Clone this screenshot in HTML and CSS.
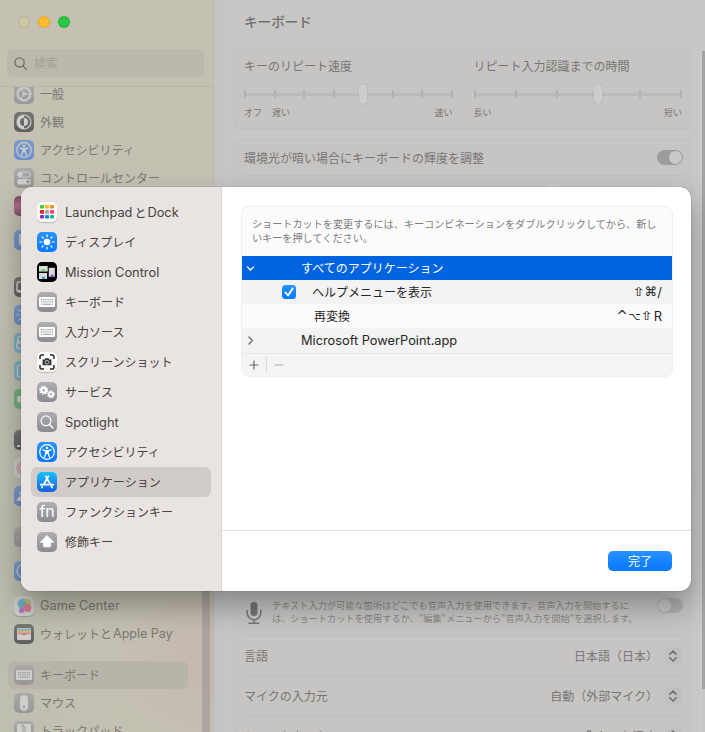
FILE: index.html
```
<!DOCTYPE html>
<html lang="ja">
<head>
<meta charset="utf-8">
<title>キーボード</title>
<link rel="stylesheet" href="styles.css">
</head>
<body>
<svg class="defs" aria-hidden="true">
  <defs>
    <symbol id="access" viewBox="0 0 20 20"><circle cx="10" cy="10" r="7.3" fill="none" stroke="currentColor" stroke-width="1.2"/><circle cx="10" cy="5.9" r="1.2" fill="currentColor"/><path d="M5.9 7.9l2.9.7v2.6l-1.3 4M14.1 7.9l-2.9.7v2.6l1.3 4M8.6 8.6h2.8M10 8.6v3" fill="none" stroke="currentColor" stroke-width="1.2" stroke-linecap="round" stroke-linejoin="round"/></symbol>
    <symbol id="keys" viewBox="0 0 20 20"><rect x="2" y="5" width="16" height="10" rx="1.3" fill="currentColor"/><path d="M4 7.6h12M4 9.8h12" stroke="#96969a" stroke-width="1.2" stroke-dasharray="1.2 .95"/><path d="M4 12.3h1.2m1 0h7.6m1 0h1.2" stroke="#96969a" stroke-width="1.1"/></symbol>
    <symbol id="sun" viewBox="0 0 20 20"><circle cx="10" cy="10" r="3.3" fill="currentColor"/><path d="M10 2.9v1.8M10 15.3v1.8M2.9 10h1.8M15.3 10h1.8M5 5l1.2 1.2M13.8 13.8L15 15M5 15l1.2-1.2M13.8 6.2L15 5" stroke="currentColor" stroke-width="1.2" stroke-linecap="round"/></symbol>
    <symbol id="lens" viewBox="0 0 20 20"><circle cx="9" cy="8.8" r="4.9" fill="none" stroke="currentColor" stroke-width="1.2"/><path d="M12.6 12.5l3.4 3.5" stroke="currentColor" stroke-width="1.4" stroke-linecap="round"/></symbol>
    <symbol id="stepper" viewBox="0 0 16 16"><path d="M4.8 6.3L8 3.1l3.2 3.2M4.8 9.8L8 13l3.2-3.2" fill="none" stroke="currentColor" stroke-width="1.5" stroke-linecap="round" stroke-linejoin="round"/></symbol>
  </defs>
</svg>

<div class="window">
  <aside class="sidebar">
    <div class="lights"><i class="light close"></i><i class="light mini"></i><i class="light full"></i></div>
    <div class="search"><svg viewBox="0 0 16 16"><circle cx="7" cy="6.8" r="4.9"/><path d="M10.6 10.6l3.6 3.7"/></svg><span>検索</span></div>
    <div class="scroll">
      <ul class="nav">
        <li><span class="ic gray"><svg viewBox="0 0 20 20"><circle cx="10" cy="10" r="6.2" fill="none" stroke="currentColor" stroke-width="1.5"/><circle cx="10" cy="10" r="7.4" fill="none" stroke="currentColor" stroke-width="1" stroke-dasharray="1 .93"/><circle cx="10" cy="10" r="1.5" fill="currentColor"/><path d="M10 10h6M10 10L7 4.8M10 10l-3 5.2" stroke="currentColor"/></svg></span>一般</li>
        <li><span class="ic dark"><svg viewBox="0 0 20 20"><circle cx="10" cy="10" r="7" fill="none" stroke="currentColor" stroke-width="1.2"/><path d="M10 3a7 7 0 0 0 0 14v-3a4 4 0 0 1 0-8zM10 6a4 4 0 0 1 0 8z" fill="currentColor"/></svg></span>外観</li>
        <li><span class="ic blue"><svg><use href="#access"/></svg></span>アクセシビリティ</li>
        <li><span class="ic gray"><svg viewBox="0 0 20 20"><rect x="3.7" y="4" width="12.6" height="5.2" rx="2.6" fill="none" stroke="currentColor" stroke-width="1"/><circle cx="6.4" cy="6.6" r="2.4" fill="currentColor"/><rect x="3.2" y="11" width="13.6" height="5.6" rx="2.8" fill="currentColor"/><circle cx="14" cy="13.8" r="1.6" fill="#8d8d8f"/></svg></span>コントロールセンター</li>
        <li><span class="ic siri"></span></li>
        <li class="g6"><span class="ic blue"><svg viewBox="0 0 20 20"><path d="M6 4v8q0 4 5 4" fill="none" stroke="currentColor" stroke-width="2"/></svg></span></li>
        <li class="g18"><span class="ic dark"><svg viewBox="0 0 20 20"><rect x="3" y="5" width="14" height="10" rx="2" fill="none" stroke="currentColor" stroke-width="1.5"/><path d="M3 14h8" stroke="currentColor" stroke-width="2"/></svg></span></li>
        <li><span class="ic blue"><svg><use href="#sun"/></svg></span></li>
        <li><span class="ic cyan"><svg viewBox="0 0 20 20"><circle cx="7" cy="7" r="3.5" fill="none" stroke="currentColor" stroke-width="1.2"/><circle cx="6" cy="12" r="3.5" fill="none" stroke="currentColor" stroke-width="1.2"/></svg></span></li>
        <li><span class="ic cyan"><svg viewBox="0 0 20 20"><rect x="3.5" y="4" width="13" height="12" rx="1.5" fill="none" stroke="currentColor" stroke-width="1.2"/></svg></span></li>
        <li><span class="ic green"><svg viewBox="0 0 20 20"><rect x="3" y="7" width="12" height="6.5" rx="2" fill="currentColor"/></svg></span></li>
        <li class="g13"><span class="ic dark"><svg viewBox="0 0 20 20"><path d="M3 16h3" stroke="currentColor" stroke-width="2"/></svg></span></li>
        <li><span class="ic touch"><svg viewBox="0 0 20 20"><circle cx="10" cy="10" r="7" fill="none" stroke="#c66c78" stroke-width="1" stroke-dasharray="3 1"/><circle cx="10" cy="10" r="5" fill="none" stroke="#c66c78" stroke-width="1"/></svg></span></li>
        <li><span class="ic blue"><svg viewBox="0 0 20 20"><circle cx="8" cy="7" r="2.5" fill="currentColor"/><path d="M2.5 15q1-5 5.5-5t5.5 5z" fill="currentColor"/></svg></span></li>
        <li class="g13"><span class="ic gray"></span></li>
        <li class="g6"><span class="ic blue"><svg viewBox="0 0 20 20"><circle cx="10" cy="10" r="7" fill="none" stroke="currentColor" stroke-width="1.2"/></svg></span></li>
        <li class="g7 latin"><span class="ic white"><svg viewBox="0 0 20 20"><circle cx="9" cy="8" r="5.4" fill="#5fb3bd"/><circle cx="12.5" cy="7.6" r="4.6" fill="#b9bb68"/><circle cx="9" cy="8.5" r="3.7" fill="#6aa5c2"/><circle cx="13.3" cy="12" r="4" fill="#d87187"/><circle cx="7.6" cy="14.5" r="2.6" fill="#a36fc9"/></svg></span>Game Center</li>
        <li><span class="ic dark"><svg viewBox="0 0 20 20"><rect x="3" y="4" width="14" height="12" rx="1.2" fill="#d0cfcc"/><path d="M3.5 5.5h13" stroke="#6faec0" stroke-width="1.4"/><path d="M3.5 7h13" stroke="#c9b069" stroke-width="1.4"/><path d="M3.5 8.5h13v1.7h-4q-2.5 2.5-5 0h-4z" fill="#cf8378"/></svg></span>ウォレットと<b>Apple Pay</b></li>
        <li class="g13 on"><span class="ic gray"><svg><use href="#keys"/></svg></span>キーボード</li>
        <li><span class="ic gray"><svg viewBox="0 0 20 20"><rect x="6" y="2.3" width="8" height="15.4" rx="3.8" fill="currentColor"/><circle cx="10" cy="14" r="1.2" fill="#98989a"/></svg></span>マウス</li>
        <li><span class="ic gray"><svg viewBox="0 0 20 20"><rect x="3" y="3" width="14" height="9" rx="1" fill="currentColor"/><path d="M9 4v9M7 6q2-4 4 0v5" fill="none" stroke="#98989a"/></svg></span>トラックパッド</li>
      </ul>
      <i class="bar"></i>
    </div>
  </aside>

  <main class="pane">
    <h1>キーボード</h1>
    <section class="card sliders">
      <div class="setting">
        <div>キーのリピート速度</div>
        <div class="track"><i></i><i></i><i></i><i></i><i class="knob"></i><i></i><i></i><i></i></div>
        <div class="ends"><span>オフ</span><span class="slow">遅い</span><span class="last">速い</span></div>
      </div>
      <div class="setting">
        <div>リピート入力認識までの時間</div>
        <div class="track"><i></i><i></i><i></i><i class="knob"></i><i></i><i></i></div>
        <div class="ends"><span>長い</span><span class="last">短い</span></div>
      </div>
    </section>
    <section class="card light-card">
      <div class="row short"><span>環境光が暗い場合にキーボードの輝度を調整</span><i class="toggle active"></i></div>
      <div class="row brightness"><i class="dot"></i></div>
    </section>
    <section class="card voice">
      <div class="row dictation">
        <svg class="mic" viewBox="0 0 16 24"><rect x="4.5" y="1" width="7" height="14" rx="3.5" fill="currentColor"/><path d="M1.2 9.5v2.5a6.8 6.8 0 0 0 13.6 0V9.5M8 18.8V22M3 22.2h10" fill="none" stroke="currentColor" stroke-width="1.5" stroke-linecap="round"/></svg>
        <p>テキスト入力が可能な箇所はどこでも音声入力を使用できます。音声入力を開始するに<br>は、ショートカットを使用するか、<q>編集</q>メニューから<q>音声入力を開始</q>を選択します。</p>
        <i class="toggle"></i>
      </div>
      <div class="row"><span>言語</span><span class="value">日本語（日本）</span><svg class="step"><use href="#stepper"/></svg></div>
      <div class="row"><span>マイクの入力元</span><span class="value">自動（外部マイク）</span><svg class="step"><use href="#stepper"/></svg></div>
      <div class="row"><span>ショートカット</span><span class="value key"><svg viewBox="0 0 8 12"><rect x="2" y=".7" width="4" height="8" rx="2" fill="none" stroke="currentColor" stroke-width="1.2"/></svg>キーを押す</span><svg class="step"><use href="#stepper"/></svg></div>
    </section>
    <i class="page-bar"></i>
  </main>
</div>

<div class="dialog" role="dialog">
  <ul class="menu">
    <li class="latin"><span class="ic white"><svg viewBox="0 0 20 20"><g><rect x="3" y="3" width="4" height="3.5" rx=".8" fill="#3fce37"/><rect x="8" y="3" width="4" height="3.5" rx=".8" fill="#ffb31c"/><rect x="13" y="3" width="4" height="3.5" rx=".8" fill="#ff8c20"/><rect x="3" y="8" width="4" height="3.8" rx=".8" fill="#e42525"/><rect x="8" y="8" width="4" height="3.8" rx=".8" fill="#a5a7ad"/><rect x="13" y="8" width="4" height="3.8" rx=".8" fill="#ff4370"/><rect x="3" y="13" width="4" height="3.5" rx=".8" fill="#8c2fca"/><rect x="8" y="13" width="4" height="3.5" rx=".8" fill="#1686e8"/><rect x="13" y="13" width="4" height="3.5" rx=".8" fill="#17b597"/></g></svg></span>Launchpad<em>と</em>Dock</li>
    <li><span class="ic blue"><svg><use href="#sun"/></svg></span>ディスプレイ</li>
    <li class="latin"><span class="ic black"><svg viewBox="0 0 20 20"><path d="M2 4h8.7v5.5H2zM2 10.9h8v6H2zM11.8 5.8h6v8.9h-6z" fill="#dadada"/><rect x="4.7" y="7.5" width="3.2" height="2" fill="#32d43e"/><rect x="5" y="14.9" width="3" height="2" fill="#1ba4ee"/><rect x="13.8" y="12.7" width="2.6" height="2" fill="#8a3ae0"/></svg></span>Mission Control</li>
    <li><span class="ic gray"><svg><use href="#keys"/></svg></span>キーボード</li>
    <li><span class="ic gray"><svg><use href="#keys"/></svg></span>入力ソース</li>
    <li><span class="ic white"><svg viewBox="0 0 20 20"><path d="M3 7V4.5Q3 3 4.5 3H7M13 3h2.5Q17 3 17 4.5V7M17 13v2.5q0 1.5-1.5 1.5H13M7 17H4.5Q3 17 3 15.5V13" fill="none" stroke="#29292b" stroke-width="1.5"/><path d="M5.6 7.5h2l.8-1.2h3.2l.8 1.2h2v5.8H5.6z" fill="#333"/><circle cx="10" cy="10.2" r="1.8" fill="none" stroke="#ddd" stroke-width=".8"/></svg></span>スクリーンショット</li>
    <li><span class="ic gray"><svg viewBox="0 0 20 20" fill="none" stroke="currentColor"><circle cx="6.7" cy="8.2" r="2.4" stroke-width="2.2"/><circle cx="6.7" cy="8.2" r="3.9" stroke-width="1.3" stroke-dasharray="1.6 1.46"/><circle cx="14" cy="12.3" r="2.1" stroke-width="2"/><circle cx="14" cy="12.3" r="3.4" stroke-width="1.2" stroke-dasharray="1.35 1.32"/></svg></span>サービス</li>
    <li class="latin"><span class="ic gray"><svg><use href="#lens"/></svg></span>Spotlight</li>
    <li><span class="ic blue"><svg><use href="#access"/></svg></span>アクセシビリティ</li>
    <li class="on"><span class="ic store"><svg viewBox="0 0 20 20"><path d="M11.4 4.3L6.8 12.2M5.3 14.7l-.5.9M8.7 4.3l6.5 11.3M3.7 12.7h7.6M13.9 12.7h2.5" fill="none" stroke="currentColor" stroke-width="1.7" stroke-linecap="round"/></svg></span>アプリケーション</li>
    <li><span class="ic gray fn">fn</span>ファンクションキー</li>
    <li><span class="ic gray"><svg viewBox="0 0 20 20"><path d="M10 3.5l6.5 6.7h-3.2v4.6H6.7v-4.6H3.5z" fill="currentColor" stroke="currentColor" stroke-width="1" stroke-linejoin="round"/></svg></span>修飾キー</li>
  </ul>
  <div class="content">
    <div class="body">
      <div class="table">
        <p class="hint">ショートカットを変更するには、キーコンビネーションをダブルクリックしてから、新しいキーを押してください。</p>
        <div class="line selected"><svg class="chev" viewBox="0 0 10 10"><path d="M1.5 3.2L5 6.7l3.5-3.5"/></svg><span class="group">すべてのアプリケーション</span></div>
        <div class="line alt"><span class="check"><svg viewBox="0 0 14 14"><path d="M3.5 7.5l2.5 3 4.7-7"/></svg></span><span class="command">ヘルプメニューを表示</span><span class="combo"><i class="shift">⇧</i><i>⌘</i><b>/</b></span></div>
        <div class="line"><span class="command plain">再変換</span><span class="combo"><i class="caret">^</i><i class="option">⌥</i><i class="shift">⇧</i><b>R</b></span></div>
        <div class="line alt app"><svg class="chev" viewBox="0 0 10 10"><path d="M3.3 1.2L7.2 5 3.3 8.8"/></svg><span class="group latin">Microsoft PowerPoint.app</span></div>
        <div class="tools"><svg class="plus" viewBox="0 0 10 10"><path d="M5 .5v9M.5 5h9"/></svg><i></i><svg class="minus" viewBox="0 0 10 10"><path d="M.5 5h9"/></svg></div>
      </div>
    </div>
    <footer><button>完了</button></footer>
  </div>
</div>
</body>
</html>
```
FILE: styles.css
```
* { box-sizing: border-box; }
body {
  margin: 0;
  width: 705px;
  height: 732px;
  overflow: hidden;
  position: relative;
  font: 12px/16px "Noto Sans CJK JP", sans-serif;
  color: #777674;
}
ul, p, h1 { margin: 0; padding: 0; list-style: none; }
i, em { font-style: normal; }
svg { display: block; flex: none; }
.defs { position: absolute; width: 0; height: 0; }

.window { display: flex; width: 705px; height: 732px; }
.sidebar {
  width: 214px;
  flex: none;
  display: flex;
  flex-direction: column;
  border-right: 1px solid #bbb8ac;
  background:
    radial-gradient(ellipse 110px 90px at 100% 90%, rgba(198,182,174,.9), rgba(198,182,174,0)),
    radial-gradient(ellipse 130px 420px at 0 75%, rgba(184,188,172,.7), rgba(184,188,172,0)),
    #c4c1b3;
}
.lights { display: flex; gap: 8px; padding: 16px 0 0 18px; height: 49px; }
.light { width: 12px; height: 12px; border-radius: 50%; border: .5px solid rgba(0,0,0,.1); }
.close { background: #cfc8a5; }
.mini { background: #ffbc2e; }
.full { background: #28c840; }
.search {
  display: flex;
  align-items: center;
  gap: 6px;
  height: 28px;
  width: 197px;
  margin-left: 7px;
  padding-left: 6px;
  border-radius: 6px;
  background: #bcb9ac;
  color: #a3a197;
}
.search svg { width: 15px; height: 15px; fill: none; stroke: #6f6e68; stroke-width: 1.4; stroke-linecap: round; }
.scroll { position: relative; flex: 1; min-height: 0; overflow: hidden; margin-top: 9px; border-top: 1px solid #b7b5a8; }
.nav { margin-top: -7px; padding-left: 8px; }
.nav li { display: flex; align-items: center; height: 28px; width: 180px; padding-left: 6px; border-radius: 6px; color: #7b7972; white-space: nowrap; }
.nav .ic { margin-right: 6px; opacity: .9; color: #d1d0cf; }
.nav .g6 { margin-top: 6px; }
.nav .g7 { margin-top: 7px; }
.nav .g18 { margin-top: 19px; }
.nav .g13 { margin-top: 13px; }
.nav .on { background: #b9b4a9; }
.latin, .nav b { font: 400 12.8px/16px Inter, "Noto Sans CJK JP", sans-serif; }
.nav b { font-size: 12.5px; padding-left: 1px; }
.bar { position: absolute; right: 3px; top: 440px; bottom: 0; width: 8px; background: #aca49e; }

.ic { width: 20px; height: 20px; flex: none; border-radius: 5px; color: #fff; overflow: hidden; }
.ic svg { width: 20px; height: 20px; }
.gray { background: linear-gradient(#aeaeb3, #8b8b91); }
.blue { background: linear-gradient(#2993ff, #0878fd); }
.white { background: linear-gradient(#fff, #f3f3f2); box-shadow: 0 .5px 1px rgba(0,0,0,.2); }
.black { background: #000; }
.store { background: linear-gradient(#1cc0fa, #145fe0); }
.nav .gray { background: linear-gradient(#a9a8a8, #939395); }
.nav .blue { background: linear-gradient(#7499cf, #6489c8); }
.nav .dark { background: linear-gradient(#707070, #545556); }
.nav .cyan { background: #76acc2; }
.nav .green { background: #6bb078; }
.nav .siri { background: linear-gradient(#714356, #b36384, #704b60); }
.nav .touch, .nav .white { background: #cfcdcd; }

.pane {
  position: relative;
  flex: 1;
  padding: 0 13px 0 20px;
  background: linear-gradient(90deg, #c4c3c4 0, #c8c7c5 20px);
  min-width: 0;
}
h1 { height: 48px; padding: 11px 0 0 10px; font-size: 13.6px; line-height: 20px; font-weight: 500; color: #706f6d; }
.card { width: 458px; border: 1px solid #c2c1bf; border-radius: 6px; background: #c6c5c3; }
.sliders { display: flex; gap: 21px; height: 81px; padding: 9px 9px 0; }
.setting { width: 209px; }
.track { display: flex; justify-content: space-between; align-items: center; height: 20px; margin-top: 10px; background: linear-gradient(#bcbbb9, #bcbbb9) center / 100% 3px no-repeat; }
.track i { width: 2px; height: 8px; background: #b1b0ae; border-radius: 1px; }
.track .knob { width: 8px; height: 20px; margin: 0 -3px; border-radius: 4px; background: #cdcdcd; box-shadow: 0 0 1.5px rgba(0,0,0,.22); }
.ends { display: flex; font-size: 9px; line-height: 13px; margin-top: 2px; }
.slow { margin-left: 10px; }
.last { margin-left: auto; }
.light-card { height: 340px; margin-top: 10px; padding: 0 8px 0 9px; }
.row { display: flex; align-items: center; height: 40px; border-bottom: 1px solid #bfbebc; }
.row.short { height: 36px; }
.toggle { width: 26px; height: 15px; margin-left: auto; border-radius: 8px; background: #b3b2b0; display: flex; padding: 1px; flex: none; }
.toggle::after { content: ""; width: 13px; height: 13px; border-radius: 50%; background: #c9c8c8; }
.toggle.active { background: #9d9c9b; justify-content: flex-end; }
.brightness { align-items: flex-start; border: 0; padding: 9px 0 0 301px; }
.dot { width: 12px; height: 12px; border-radius: 50%; background: #cfcece; }
.voice { height: 250px; margin-top: 11px; padding: 0 8px 0 9px; }
.dictation { height: 145px; align-items: flex-end; padding-bottom: 10px; }
.mic { width: 16px; height: 24px; margin: 0 10px 0 2px; }
.dictation p { font-size: 9.2px; line-height: 13px; white-space: nowrap; color: #898886; }
.dictation q { quotes: none; }
.dictation q::before, .dictation q::after { content: '"'; }
.dictation .toggle { margin-bottom: 12px; background: #b1b0ae; }
.value { margin-left: auto; margin-right: 7px; }
.key { display: flex; align-items: center; gap: 3px; margin-right: 9px; }
.key svg { width: 8px; height: 12px; }
.step { width: 16px; height: 16px; margin-right: 2px; border-radius: 4px; background: #c0bfbd; color: #6e6d6b; }
.page-bar { position: absolute; right: 0; top: 48px; bottom: 0; width: 5px; border-left: 2px solid #cbcac9; background: linear-gradient(transparent 3px, #a3a3a5 3px, #a3a3a5 641px, #c8c7c6 641px); }

.dialog {
  position: absolute;
  left: 21px;
  top: 187px;
  width: 670px;
  height: 404px;
  display: flex;
  overflow: hidden;
  border-radius: 11px;
  background: #fff;
  color: #262626;
  box-shadow: 0 0 1px rgba(0,0,0,.65), 0 15px 30px rgba(0,0,0,.32);
}
.menu { width: 201px; flex: none; padding: 10px 10px; background: #e9e4e2; border-right: 1px solid #d8d4d2; }
.menu li { display: flex; align-items: center; width: 180px; height: 30px; padding-left: 6px; border-radius: 6px; color: #454341; }
.menu .ic { margin-right: 8px; }
.menu .on { background: #d1ccca; }
.menu .latin { padding-top: 1px; }
.menu .latin .ic { margin-top: -1px; }
.menu em { font-family: "Noto Sans CJK JP", sans-serif; font-size: 12px; margin: 0 1px 0 2px; }
.fn { font: 400 16px/19px Inter, sans-serif; text-align: center; letter-spacing: -.3px; }
.content { flex: 1; display: flex; flex-direction: column; min-width: 0; }
.body { flex: 1; padding: 20px 19px 0 20px; }
.table { width: 430px; height: 169px; border-radius: 6px; overflow: hidden; background: #fbfbfb; box-shadow: 0 0 0 .5px #e2e2e2; }
.hint { height: 49px; padding: 10px 10px 0; font-size: 10.15px; line-height: 14px; color: #7d7d7d; }
.line { display: flex; align-items: center; height: 24px; padding: 0 10px 0 4px; }
.line.app { height: 25px; }
.alt { background: #f3f3f3; }
.selected { background: #0064e1; color: #fff; }
.chev { width: 9px; height: 9px; fill: none; stroke: #6b6b6b; stroke-width: 1.5; stroke-linecap: round; stroke-linejoin: round; }
.selected .chev { stroke: #fff; }
.group { margin-left: 46px; }
.check { width: 14px; height: 14px; margin-left: 36px; border-radius: 3.5px; background: linear-gradient(#2993ff, #0878fd); }
.check svg { width: 14px; height: 14px; fill: none; stroke: #fff; stroke-width: 1.9; stroke-linecap: round; stroke-linejoin: round; }
.command { margin-left: 16px; }
.plain { margin-left: 68px; }
.combo { display: flex; margin-left: auto; font: 13px/16px Inter, sans-serif; }
.combo i { width: 12px; text-align: center; font-family: "DejaVu Sans", sans-serif; font-size: 12.5px; }
.combo .shift { transform: scaleX(1.3); font-size: 12px; }
.combo .option { font-size: 10.5px; margin-right: 1px; }
.combo .caret { font-size: 14px; }
.combo b { font-weight: 400; padding-left: .5px; }
.tools { display: flex; align-items: center; height: 23px; padding-left: 7px; background: #f4f4f4; border-top: 1px solid #e8e8e8; }
.tools svg { width: 10px; height: 10px; fill: none; stroke: #666; stroke-width: 1.2; }
.tools i { width: 1px; height: 16px; margin: 0 7px; background: #ddd; }
.tools .minus { stroke: #b5b5b5; }
footer { display: flex; justify-content: flex-end; height: 61px; padding: 20px 19px 0 0; border-top: 1px solid #e1e1e1; }
button { width: 64px; height: 20px; padding: 0 0 1px; border: 0; border-radius: 5px; background: linear-gradient(#2792ff, #0577fe); color: #fff; font: 12px/18px "Noto Sans CJK JP", sans-serif; }
```
